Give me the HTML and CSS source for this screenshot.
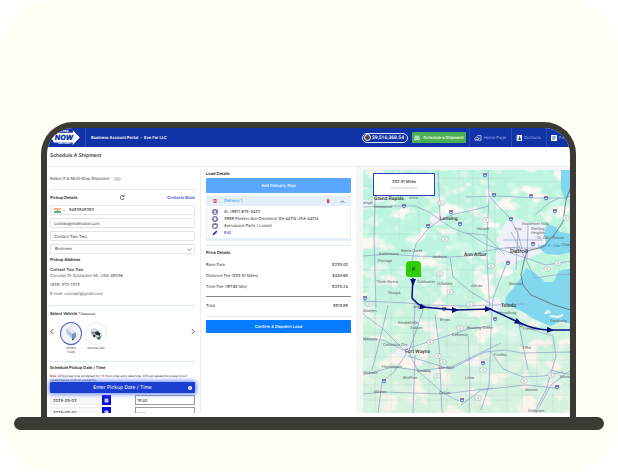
FILE: index.html
```html
<!DOCTYPE html>
<html lang="en">
<head>
<meta charset="utf-8">
<title>Schedule A Shipment</title>
<link rel="stylesheet" href="styles.css">
</head>
<body>
<div class="stage">
  <div class="laptop">
    <header class="topbar">
      <svg class="logo" viewBox="0 0 32 19" aria-hidden="true">
        <path d="M3 4h21V1l8 8.500-8 8.500v-3H3L0 9.500z" fill="#fff"/>
        <path d="M6 0h18v4H6zM8 15h15v3H8z" fill="#1034a6"/>
        <text x="7" y="3" class="logo-small">ALL PRO</text>
        <text x="4" y="12" class="logo-big">NOW</text>
        <text x="8" y="17" class="logo-small">DELIVERY</text>
      </svg>
      <span class="portal">Business Account Portal &nbsp;-&nbsp; Eve For LLC</span>
      <span class="balance"><span class="avatar"></span>$9,516,368.54</span>
      <button class="ship-btn" type="button">
        <svg viewBox="0 0 10 10" class="ico" fill="none" stroke="#fff"><path d="M2 4V2h6v2M1 4.500h8v3H1zM3 3.500h4M2 7.500v2M8 7.500v2M3 6h4M1 1l1 1M9 1L8 2"/></svg>
        Schedule a Shipment
      </button>
      <nav class="nav">
        <a href="#"><svg viewBox="0 0 12 10" class="ico wide" fill="none" stroke="#fff"><path d="M1 9V5l3-2 3 2v4H5V7H3v2zM5 2V1h6v8H8M9 3v1M9 5v1"/></svg>Home Page</a>
        <a href="#"><svg viewBox="0 0 10 10" class="ico"><path d="M2 0h8v10H2zM0 1h1v2H0zM0 4h1v2H0zM0 7h1v2H0z" fill="#fff"/><circle cx="6" cy="3.500" r="1.300" fill="#1034a6"/><path d="M3.500 8q0-3 2.500-3t2.500 3z" fill="#1034a6"/></svg>Contacts</a>
        <a href="#"><svg viewBox="0 0 10 10" class="ico"><rect width="10" height="10" rx="1" fill="#fff"/><path d="M2 3h6M2 5h6M2 7h4" stroke="#1034a6"/></svg>Past</a>
      </nav>
    </header>

    <h1 class="page-title">Schedule A Shipment</h1>

    <main class="columns">
      <form class="pickup">
        <div class="multi">
          <label for="multi">Select If A Multi-Stop Shipment</label>
          <input id="multi" class="toggle" type="checkbox">
        </div>
        <div class="pickup-head">
          <h2>Pickup Details</h2>
          <button class="plain" type="button" aria-label="Reset"><svg viewBox="0 0 10 10" class="ico small" fill="none" stroke="#222" stroke-width="1.300"><path d="M8.500 6A4 4 0 1 1 7.500 2.500M8 0v3H5"/></svg></button>
          <a href="#">Contacts Book</a>
        </div>
        <div class="fields">
          <div class="field phone">
            <svg class="flag" viewBox="0 0 9 6" aria-hidden="true"><path d="M0 0h9v2H0z" fill="#f7933b"/><path d="M0 2h9v2H0z" fill="#f4f4f4"/><path d="M0 4h9v2H0z" fill="#2b9a3b"/><circle cx="4.500" cy="3" r=".7" fill="#3b4aa0"/></svg>
            <svg class="caret" viewBox="0 0 4 3" aria-hidden="true"><path d="M0 0h4L2 3z" fill="#666"/></svg>
            <input type="text" value="9483848383" aria-label="Phone">
          </div>
          <input class="field" type="text" value="contwo@mailinator.com" aria-label="Email">
          <input class="field" type="text" value="Contact Two Two" aria-label="Name">
          <div class="field select">
            <select aria-label="Location type"><option>Business</option></select>
            <svg class="chev" viewBox="0 0 8 5" fill="none" stroke="#333" aria-hidden="true"><path d="M1 1l3 3 3-3"/></svg>
          </div>
        </div>
        <section class="address">
          <h2>Pickup Address</h2>
          <p class="strong">Contact Two Two</p>
          <p>Concept Dr Coldwater MI, USA-49036</p>
          <p class="spaced">(938) 373-7373</p>
          <p class="spaced">E-mail: concept@gmail.com</p>
        </section>
        <section class="vehicles">
          <h2>Select Vehicle <b>*</b><small>(Required)</small></h2>
          <div class="carousel">
            <button class="plain arrow" type="button" aria-label="Previous"><svg viewBox="0 0 5 8" fill="none" stroke="#222"><path d="M4 1L1 4l3 3"/></svg></button>
            <button class="vehicle" type="button">
              <svg class="disc chosen" viewBox="0 0 22 23"><path d="M6 6l4-2 6 6v7l-3 1-7-7z" fill="#d8e0ea"/><path d="M6 6l7 6v6L6 11z" fill="#b5c5d6"/><path d="M10 4l6 6-3 2-7-6z" fill="#e6ebf1"/><path d="M12 12l4-2 1 5-3 3-2-1z" fill="#6d96c4"/><circle cx="13" cy="18" r="1" fill="#445"/></svg>
              26 Box<br>Truck
            </button>
            <button class="vehicle" type="button">
              <svg class="disc" viewBox="0 0 22 23"><path d="M5 8l3-3 7 3 3 5-3 5-8-4z" fill="#d5d9dd"/><path d="M9 10l4-1 3 3-1 2-4-1z" fill="#23292e"/><path d="M6 9l3 1-1 3-2-1z" fill="#7c8790"/><circle cx="9" cy="14" r="1.500" fill="#333"/><circle cx="14" cy="17" r="1.500" fill="#444"/><path d="M10 16l4-1 3-1-1 3z" fill="#5f7a78"/></svg>
              Sprinter Van
            </button>
            <button class="plain arrow next" type="button" aria-label="Next"><svg viewBox="0 0 5 8" fill="none" stroke="#222"><path d="M1 1l3 3-3 3"/></svg></button>
          </div>
        </section>
        <section class="times">
          <h2>Schedule Pickup Date / Time</h2>
          <p class="note"><b>Note:</b> ATN pickup time will default to <b>1 Hr</b> from order entry date/time. ATN will update the pickup time if needed based on driver availability.</p>
          <button class="enter" type="button"><span>Enter Pickup Date / Time</span>
            <svg viewBox="0 0 10 10" class="ico tiny"><circle cx="5" cy="5" r="5" fill="#fff"/><path d="M5 2v1.500M5 4.500v3.500" stroke="#1a3fd0" stroke-width="1.600"/></svg>
          </button>
          <div class="slot">
            <input class="date" type="text" value="2025-09-03" aria-label="Start date">
            <button class="cal" type="button" aria-label="Pick start date"><svg viewBox="0 0 8 8"><path d="M1 1h6v6H1z" fill="#fff"/><path d="M1 3h6M3 4v2M5 4v2" stroke="#2b2be0" stroke-width=".7"/></svg></button>
            <input class="time" type="text" value="18:40" aria-label="Start time">
          </div>
          <div class="slot cut">
            <input class="date" type="text" value="2025-09-04" aria-label="End date">
            <button class="cal" type="button" aria-label="Pick end date"><svg viewBox="0 0 8 8"><path d="M1 1h6v6H1z" fill="#fff"/><path d="M1 3h6M3 4v2M5 4v2" stroke="#2b2be0" stroke-width=".7"/></svg></button>
            <input class="time" type="text" value="--:--" aria-label="End time">
          </div>
        </section>
      </form>

      <section class="load">
        <h2>Load Details</h2>
        <button class="add" type="button">Add Delivery Stop</button>
        <article class="delivery">
          <header>
            <svg viewBox="0 0 8 8" class="ico tiny"><path d="M1 0h6v8H1z" fill="#e8384a"/><path d="M2 3h4M2 5h3" stroke="#fff"/></svg>
            <h3>Delivery 1</h3>
            <button class="plain" type="button" aria-label="Remove"><svg viewBox="0 0 8 8" class="ico tiny"><path d="M1 1h2V0h2v1h2v1H1zM2 2h4.500v6H2z" fill="#e8384a"/></svg></button>
            <button class="plain" type="button" aria-label="Collapse"><svg viewBox="0 0 8 8" class="ico small" fill="none" stroke="#333"><path d="M1 6l3-3 3 3"/></svg></button>
          </header>
          <ul>
            <li><svg viewBox="0 0 10 10" class="ico"><circle cx="5" cy="5" r="5" fill="#7476ae"/><circle cx="5" cy="4" r="1.600" fill="#fff"/><path d="M2 8q3-4 6 0z" fill="#fff"/></svg>Al, (987) 675-3422</li>
            <li><svg viewBox="0 0 10 10" class="ico"><circle cx="5" cy="5" r="5" fill="#7476ae"/><path d="M5 8.500L2.500 4.500a2.500 2.500 0 1 1 5 0z" fill="#fff"/></svg>3888 Perkins Ave Cleveland OH 44114 USA-44114</li>
            <li><svg viewBox="0 0 10 10" class="ico"><circle cx="5" cy="5" r="5" fill="#7476ae"/><path d="M2.500 3.500h5v4h-5z" fill="#fff"/></svg>Aerospace Parts ( Loose)</li>
            <li><svg viewBox="0 0 10 10" class="ico"><path d="M1 9l1-3 5-5 2 2-5 5z" fill="#1c2cc8"/></svg><a href="#">Edit</a></li>
          </ul>
        </article>
        <div class="price">
          <h2>Price Details</h2>
          <dl>
            <div><dt>Base Fare</dt><dd>$235.00</dd></div>
            <div><dt>Distance Fee (202.51 Miles)</dt><dd>$455.65</dd></div>
            <div><dt>Time Fee (187.62 Min)</dt><dd>$225.24</dd></div>
            <div class="total"><dt>Total</dt><dd>$915.89</dd></div>
          </dl>
        </div>
        <button class="confirm" type="button">Confirm &amp; Dispatch Load</button>
      </section>

      <section class="map-wrap">
        <div class="map">
          <svg class="map-art" viewBox="0 0 208 243" preserveAspectRatio="xMinYMin slice" role="img" aria-label="Route map">
            <defs>
              <filter id="fields" x="0" y="0" width="100%" height="100%">
                <feTurbulence type="fractalNoise" baseFrequency=".045 .06" numOctaves="3" seed="8"/>
                <feColorMatrix values="0 0 0 0 .97  0 0 0 0 .94  0 0 0 0 .89  7 0 0 0 -3.800"/>
              </filter>
              <filter id="woods" x="0" y="0" width="100%" height="100%">
                <feTurbulence type="fractalNoise" baseFrequency=".07" numOctaves="3" seed="21"/>
                <feColorMatrix values="0 0 0 0 .64  0 0 0 0 .94  0 0 0 0 .79  0 6 0 0 -3.200"/>
              </filter>
              <linearGradient id="south" x1="0" y1="0" x2="0" y2="1"><stop offset=".35" stop-color="#f8eee4" stop-opacity="0"/><stop offset="1" stop-color="#f8eee4" stop-opacity=".45"/></linearGradient>
              <g id="us"><path d="M-2-2h4v2q0 1.500-2 2.500-2-1-2-2.500z" fill="#5b82cc"/><path d="M-2-2h4v1h-4z" fill="#b5708f"/><path d="M-1 .6h2" stroke="#fff" stroke-width=".7"/></g>
              <g id="st"><rect x="-3" y="-2" width="6" height="4" rx="1.500" fill="#fff" fill-opacity=".9" stroke="#9aa1a8" stroke-width=".5"/><path d="M-1.200 0h2.400" stroke="#999" stroke-width=".8"/></g>
              <path id="arw" d="M-3-3L4 0l-7 3z" fill="#05107c"/>
            </defs>
            <rect width="208" height="243" fill="#bdf4de"/>
            <rect width="208" height="243" filter="url(#woods)"/>
            <rect width="208" height="243" filter="url(#fields)"/>
            <rect width="208" height="243" fill="url(#south)"/>
            <g fill="#f0f1f8">
              <path d="M143 50l8 2 6-3 10 4 8-1 8 5-2 6 5 6-8 14-12 5-12 3-10 8-4-8-7 4-1-10 5-8-4-8 6-6z"/>
              <path d="M68 44l9-2 6 4-1 8-10 2-5-5z"/><path d="M10 25l12-4 4 6-6 5-10 1zM0 30l8 1v5H0z"/>
              <path d="M36 177l9-3 5 6-6 8-9-1-2-5z"/><path d="M125 129l10-2 4 6-4 8-8 1-4-6z"/><path d="M122 20l5-2 2 10-5 6z"/>
            </g>
            <g fill="#82d7ee">
              <path d="M198 0h12v14l-5 14-3 2-4-11z"/>
              <path d="M184 54l9 3 4 5 11 2v18l-12 3-13-1-6-5 6-6-2-8z"/>
              <path d="M163 98l9 5 10 9h8l6-11 12-3v56l-10-3-10 5-8-3-9-4-9-6-11-5-9-4 1-7 9-11 7-10z"/>
            </g>
            <path d="M187 146l8 1 5-2M182 144l3-3 2 2" stroke="#eaf8ef" stroke-width="2" fill="none"/>
            <g fill="none" stroke="#93a8b8" stroke-opacity=".45" stroke-width=".4">
              <path d="M0 16h75M0 64h110M12 0v110M36 0v70M56 10v60M96 0v70M0 100h120M0 117h105M28 90v40M84 90v150M110 0v130M132 30v90M0 148h120M0 163h70M0 187h90M0 215h208M0 230h150M12 130v113M28 140v100M66 130v113M103 150v93M117 160v83M144 150v93M159 155v88M174 165v78M190 165v78M80 175h128M100 190h108M120 203h88M96 225h112M60 8h90M140 12h55"/>
            </g>
            <g fill="none" stroke="#8e9dc4" stroke-width=".8" stroke-opacity=".85">
              <path d="M0 37l32-1 20 0 14 6 11 8 14-6 15-3 20-5M12 28l-1 40 2 70M75 0l1 20 1 30 12 8 13 5 20 2 20 20M77 50L64 60 53 74 49 90v40M0 86l26-2 25 2 36 1 18-1 17-5 20-3 15-1M125 0l1 26 9 10 12 12 8 16 4 15M102 27l35-1 35 2 28 0 8-2M126 28l-2 40v20l3 55M145 90l-8 20-7 18-2 30-1 35-1 22-8 25M104 63l20 12 30 10 8 3"/>
              <path d="M87 87l3 20 18 15 20 12M49 130l11 10-10 30-4 11M0 131l45 2 15 2 42 1 60-2M0 144l20 15 12 12 10 10M0 170h20l20 10 28-9 38-12 21-3M45 181l10 20 25 22 16 8M45 181l-14 21-12 10-4 31M45 186l42 13 35-17 20-2 17 3 49-1M25 135l-7 30-9 35M52 135l-2 45M52 185l-2 58M72 145l4 30 3 68M128 182l12 17 20 8 20-1 20-4M155 152l15 8 20 6 3 20-10 34-12 23M208 200l-20 15-15 28M98 235l20-15 45-5 30 3M155 60l-2 40M165 55l-1 35M140 70h40M142 78h40M148 62l14 26 10 20 20-3 16-1M163 88l20 7 25-4M172 45l14-12 10-5M155 150l10 50M105 165l2 45-1 33M187 200l21 5M60 200l28-3 50-24M0 205l30-8 38 5M0 224l20-2 60 2 50-6"/>
            </g>
            <path d="M208 16l-5 14-3 22-9 13-11 12-16 4-3 10-3 14 2 10 8 10 23 10 17 5" fill="none" stroke="#53686f" stroke-width=".8"/>
            <g>
              <use href="#us" x="41" y="36"/><use href="#us" x="88" y="42"/><use href="#us" x="65" y="56"/><use href="#us" x="97" y="54"/><use href="#us" x="122" y="5"/><use href="#us" x="131" y="25"/><use href="#us" x="168" y="26"/><use href="#us" x="183" y="28"/><use href="#us" x="192" y="41"/><use href="#us" x="148" y="49"/><use href="#us" x="170" y="74"/><use href="#us" x="145" y="93"/><use href="#us" x="2" y="128"/><use href="#us" x="81" y="139"/><use href="#us" x="132" y="149"/><use href="#us" x="158" y="155"/><use href="#us" x="120" y="193"/><use href="#us" x="21" y="211"/><use href="#us" x="99" y="230"/><use href="#us" x="194" y="217"/>
              <use href="#st" x="78" y="33"/><use href="#st" x="82" y="69"/><use href="#st" x="123" y="50"/><use href="#st" x="77" y="104"/><use href="#st" x="128" y="96"/><use href="#st" x="203" y="48"/><use href="#st" x="195" y="93"/><use href="#st" x="184" y="99"/><use href="#st" x="87" y="122"/><use href="#st" x="6" y="134"/><use href="#st" x="107" y="134"/><use href="#st" x="97" y="158"/><use href="#st" x="67" y="172"/><use href="#st" x="75" y="186"/><use href="#st" x="80" y="192"/><use href="#st" x="74" y="206"/><use href="#st" x="120" y="200"/><use href="#st" x="161" y="211"/><use href="#st" x="188" y="205"/><use href="#st" x="115" y="228"/>
            </g>
            <g class="town">
              <text x="0" y="34">angie</text><text x="46" y="29">Ionia</text><text x="11" y="38">Kentwood</text><text x="16" y="85">Kalamazoo</text><text x="15" y="92">Portage</text><text x="38" y="82">Battle Creek</text><text x="69" y="88">Jackson</text><text x="13" y="113">Three Rivers</text><text x="54" y="113">Coldwater</text><text x="74" y="115">Hillsdale</text><text x="25" y="124">Sturgis</text><text x="108" y="117">Adrian</text><text x="114" y="60">Howell</text><text x="151" y="60">Troy</text><text x="159" y="55">Rochester Hills</text><text x="168" y="60">Sterling</text><text x="168" y="64">Heights</text><text x="174" y="69">St. Clair Shores</text><text x="199" y="76">Chatham</text><text x="146" y="115">Monroe</text><text x="50" y="138">Angola</text><text x="0" y="142">Goshen</text><text x="35" y="154">Kendallville</text><text x="47" y="159">Auburn</text><text x="77" y="151">Bryan</text><text x="89" y="166">Defiance</text><text x="104" y="159">Bowling Green</text><text x="0" y="170">Warsaw</text><text x="20" y="176">Columbia City</text><text x="19" y="198">Huntington</text><text x="0" y="204">Wabash</text><text x="40" y="209">Bluffton</text><text x="54" y="202">Decatur</text><text x="75" y="199">Van Wert</text><text x="76" y="224">Celina</text><text x="102" y="209">Lima</text><text x="11" y="223">Marion</text><text x="134" y="144">Perrysburg</text><text x="187" y="152">Sandusky</text><text x="131" y="186">Findlay</text><text x="159" y="179">Tiffin</text><text x="160" y="160">Fremont</text><text x="162" y="221">Marion</text><text x="197" y="208">Mansfield</text><text x="165" y="242">Delaware</text>
              <text x="175" y="77" class="water">Lake St. Clair</text>
            </g>
            <g class="city"><text x="11" y="30">Grand Rapids</text><text x="77" y="50">Lansing</text><text x="101" y="86">Ann Arbor</text><text x="138" y="137">Toledo</text><text x="42" y="183">Fort Wayne</text><text x="147" y="83" class="metro">Detroit</text></g>
            <path d="M50 108l-1 20q5 6 11 9l32 3 35-1 28 13q16 8 32 8l23 0" fill="none" stroke="#05107c" stroke-width="1.400"/>
            <use href="#arw" transform="translate(50 112) rotate(90)"/><use href="#arw" transform="translate(60 137) rotate(12)"/><use href="#arw" transform="translate(92 140)"/><use href="#arw" transform="translate(125 139)"/><use href="#arw" transform="translate(155 152) rotate(25)"/><use href="#arw" transform="translate(187 160) rotate(4)"/>
            <path d="M46 91h8q4 0 4 4v12H46q-3 0-3-3V95q0-4 3-4z" fill="#2fcd06"/>
            <text x="49" y="101" class="pin">P</text>
          </svg>
          <div class="distance">202.51 Miles<small>Approximate Miles</small></div>
        </div>
      </section>
    </main>
  </div>
  <div class="base"></div>
</div>
</body>
</html>
```
FILE: styles.css
```css
* { box-sizing: border-box; }
body { margin: 0; background: #fff; font: 4px/6px Inter, "Liberation Sans", sans-serif; color: #333; text-rendering: geometricPrecision; }
h1, h2, h3, p, ul, dl, dd { margin: 0; padding: 0; font-size: 4px; }
button, input, select { font: inherit; color: inherit; text-rendering: inherit; margin: 0; padding: 0; border: 0; background: none; min-width: 0; }
a { color: inherit; text-decoration: none; }
svg { display: block; }

.stage { min-height: 100vh; padding-top: 122px; background: #fffff5; border-radius: 50px; }
.laptop { margin: 0 42px 0 41px; padding-bottom: 4px; border: 6px solid #3d3a36; border-bottom: 0; border-radius: 32px 32px 0 0; background: #fff; overflow: hidden; }
.base { height: 13px; margin: 0 14px; border-radius: 7px; background: #3d3a36; }

.ico { width: 6px; height: 6px; flex: none; }
.ico.wide { width: 8px; }
.ico.small { width: 5px; height: 5px; }
.ico.tiny { width: 4px; height: 4px; }
.plain { line-height: 0; }

.topbar { display: flex; align-items: center; height: 19px; padding-left: 4px; background: #1034a6; color: #fff; overflow: hidden; }
.logo { width: 29px; height: 17px; flex: none; }
.logo-big { font: italic 900 8px Inter, sans-serif; fill: #1034a6; }
.logo-small { font: 700 3px Inter, sans-serif; fill: #fff; }
.portal { display: flex; align-items: center; align-self: stretch; margin-left: 5px; padding-left: 5px; border-left: 1px solid #2a4cb8; font-weight: 600; white-space: nowrap; }
.balance { display: flex; align-items: center; gap: 1px; height: 10px; margin-left: auto; padding: 0 3px 0 1px; border: 1px solid #dfe6ff; border-radius: 5px; font: 500 5px/6px Roboto, sans-serif; }
.avatar { width: 7px; height: 7px; border: 1px solid #fff; border-radius: 50%; background: #5a473f; }
.ship-btn { display: flex; align-items: center; justify-content: center; gap: 3px; width: 54px; height: 11px; margin: 0 3px 0 4px; border-radius: 1px; background: #4caf50; font-weight: 500; white-space: nowrap; }
.nav { display: flex; align-self: stretch; width: 101px; flex: none; color: #a5b3e8; overflow: hidden; }
.nav a { display: flex; align-items: center; gap: 2px; padding: 0 5px 0 4px; border-left: 1px solid #2a4cb8; white-space: nowrap; }

.page-title { height: 20px; padding-left: 3px; border-bottom: 1px solid #eee; font-size: 5px; font-weight: 500; line-height: 19px; color: #222; }
.columns { display: grid; grid-template-columns: minmax(0, 154fr) minmax(0, 155fr) minmax(0, 214fr); }
h2 { font-weight: 600; color: #222; }

.pickup { padding: 0 5px 0 3px; border-right: 1px solid #eee; }
.multi { display: flex; align-items: center; gap: 5px; height: 23px; padding-top: 2px; border-bottom: 1px solid #dcebf0; }
.toggle { appearance: none; width: 7px; height: 4px; border-radius: 2px; background: #d4d4d4; box-shadow: -2px 0 0 #f3f3f3; }
.pickup-head { display: grid; grid-template-columns: 1fr auto 1fr; align-items: center; height: 15px; }
.pickup-head a { text-align: right; font-weight: 500; color: #1c3fc4; }
.fields { display: grid; gap: 3px; }
.field { width: 100%; height: 10px; padding: 0 3px; border: 1px solid #e2e4e8; border-radius: 1px; background: #fff; }
.phone { display: flex; align-items: center; }
.phone input { flex: 1; margin-left: 4px; }
.flag { width: 7px; height: 5px; }
.caret { width: 2px; height: 1px; margin-left: 2px; }
.select { display: flex; align-items: center; padding: 0 2px; }
.select select { flex: 1; padding-left: 2px; appearance: none; }
.chev { width: 5px; height: 3px; }
.address { padding: 3px 0 8px; border-bottom: 1px solid #dcebf0; }
.address h2 { margin-bottom: 4px; }
.address p { color: #555; }
.address .strong { font-weight: 500; color: #222; }
.address .spaced { margin-top: 3px; }
.vehicles { height: 56px; border-bottom: 1px solid #dcebf0; }
.vehicles h2 { line-height: 16px; }
.vehicles b, .note b { color: #e02020; font-weight: 500; }
.vehicles small { font-size: 3px; font-weight: 400; }
.carousel { display: flex; align-items: flex-start; gap: 3px; }
.arrow { padding-top: 6px; }
.arrow svg { width: 4px; height: 7px; }
.arrow + .vehicle { margin-left: 3px; }
.next { margin-left: auto; }
.vehicle { width: 22px; font-size: 3px; line-height: 4px; text-align: center; }
.disc { width: 22px; height: 23px; margin-bottom: 1px; border: 1px solid #eceef2; border-radius: 50%; background: #fff; }
.chosen { border-color: #4f63c8; background: #f0f4fc; }
.times h2 { line-height: 12px; }
.note { font: 3px/4px "Liberation Sans Narrow", Roboto, sans-serif; color: #333; }
.enter { display: flex; align-items: center; width: 100%; height: 11px; padding: 0 3px; border-radius: 1px; background: #1a3fd0; box-shadow: 0 0 5px 1px #5b7cff; color: #fff; font-size: 5px; position: relative; }
.enter span { flex: 1; padding-left: 4px; }
.slot { display: flex; height: 10px; margin-top: 2px; overflow: hidden; }
.slot input, .slot button { height: 10px; }
.slot.cut { height: 6px; }
.slot .date { width: 52px; padding-left: 2px; border: 1px solid #eee; background: #f8f8f8; }
.slot .cal { display: grid; place-items: center; width: 9px; background: #0b0bd8; }
.cal svg { width: 5px; height: 5px; }
.slot .time { flex: 1; margin-left: 24px; padding-left: 1px; border: 1px solid #999; }

.load { padding: 2px 5px; }
.load > h2 { line-height: 9px; }
.add, .confirm { display: block; width: 100%; border-radius: 1px; color: #fff; font-weight: 500; }
.add { height: 15px; background: #5ba6ff; }
.delivery { margin: 3px 0 4px; padding: 0 1px 3px; background: #e4f0f9; }
.delivery header { display: flex; align-items: center; gap: 10px; height: 10px; padding: 0 5px 0 6px; }
.delivery h3 { flex: 1; margin-left: -3px; font-weight: 400; color: #2389ee; }
.delivery ul { padding: 2px 5px; background: #fff; list-style: none; }
.delivery li { display: flex; align-items: center; gap: 6px; height: 7px; white-space: nowrap; }
.delivery li a { color: #1f2ee0; }
.price { border: solid #dcebf0; border-width: 1px 0; }
.price h2 { line-height: 13px; }
.price dl { padding-bottom: 5px; }
.price dl div { display: flex; justify-content: space-between; padding: 0 3px 0 0; line-height: 11px; }
.price .total { margin-top: 4px; padding-top: 3px; border-top: 1px solid #888; }
.confirm { height: 13px; margin-top: 3px; background: #087cff; }

.map-wrap { display: flex; padding: 3px 0 0 7px; background: #f5f5f5; }
.map { position: relative; flex: 1; overflow: hidden; }
.map-art { position: absolute; inset: 0; width: 100%; height: 100%; }
.town { font: 4px Roboto, sans-serif; fill: #5c6468; }
.town .water { fill: #2b8fa8; font-style: italic; }
.city { font: 500 5px Roboto, sans-serif; fill: #333; }
.city .metro { font-size: 6px; }
.pin { font: 500 5px Roboto, sans-serif; fill: #123; }
.distance { position: absolute; top: 3px; left: 10px; width: 62px; height: 23px; padding-top: 5px; border: 1px solid #2b3fc0; background: #fff; font-weight: 500; text-align: center; }
.distance small { display: block; font-size: 3px; font-weight: 400; color: #b5b5b5; }
```
